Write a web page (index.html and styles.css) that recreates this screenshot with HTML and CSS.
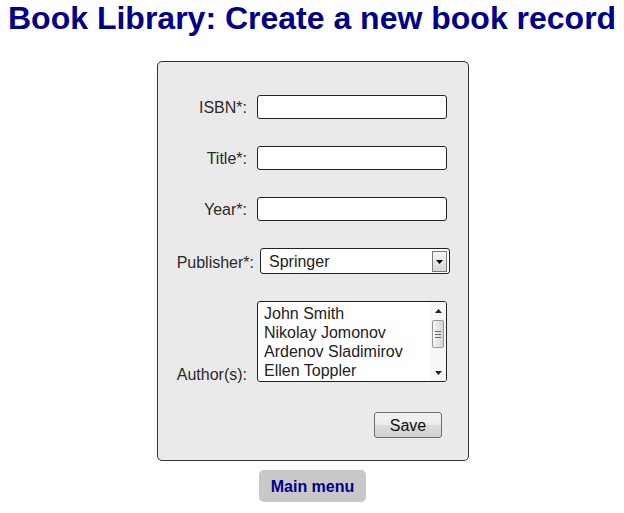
FILE: index.html
```html
<!DOCTYPE html>
<html lang="en">
<head>
<meta charset="utf-8">
<title>Book Library: Create a new book record</title>
<link rel="stylesheet" href="styles.css">
</head>
<body>
<h1 class="page-title">Book Library: Create a new book record</h1>
<form class="record-form">
  <div class="fields">
    <label class="field-label" for="isbn">ISBN*:</label>
    <input class="text-input" id="isbn" type="text">

    <label class="field-label" for="title">Title*:</label>
    <input class="text-input" id="title" type="text">

    <label class="field-label" for="year">Year*:</label>
    <input class="text-input" id="year" type="text">

    <label class="field-label field-label--wide" for="publisher">Publisher*:</label>
    <div class="select-wrap">
      <select class="select-input" id="publisher">
        <option>Springer</option>
      </select>
      <span class="select-button" aria-hidden="true">
        <svg width="7" height="4" viewBox="0 0 7 4"><path d="M0 0H7L3.5 4Z" fill="#000"/></svg>
      </span>
    </div>

    <label class="field-label field-label--bottom">Author(s):</label>
    <div class="listbox" role="listbox">
      <ul class="listbox-items">
        <li>John Smith</li>
        <li>Nikolay Jomonov</li>
        <li>Ardenov Sladimirov</li>
        <li>Ellen Toppler</li>
      </ul>
      <div class="scrollbar" aria-hidden="true">
        <span class="scroll-arrow">
          <svg width="7" height="4" viewBox="0 0 7 4"><path d="M0 4H7L3.5 0Z" fill="#222"/></svg>
        </span>
        <span class="scroll-track">
          <span class="scroll-thumb"><i></i><i></i><i></i></span>
        </span>
        <span class="scroll-arrow">
          <svg width="7" height="4" viewBox="0 0 7 4"><path d="M0 0H7L3.5 4Z" fill="#222"/></svg>
        </span>
      </div>
    </div>

    <div class="actions">
      <button class="save-button" type="button">Save</button>
    </div>
  </div>
</form>
<nav class="menu-nav">
  <a class="menu-button" href="#">Main menu</a>
</nav>
</body>
</html>
```
FILE: styles.css
```css
html, body {
  background: #fff;
}
body {
  margin: 0 8px;
  font-family: "Liberation Sans", Arial, sans-serif;
  font-size: 16px;
  color: #222;
}
.page-title {
  margin: 0 0 24px;
  font-size: 32px;
  font-weight: bold;
  color: #00008b;
  white-space: nowrap;
}
.record-form {
  box-sizing: border-box;
  width: 312px;
  margin-left: calc(50% - 155px);
  padding: 33px 21px 22px 0;
  background: #eaeaea;
  border: 1px solid #333;
  border-radius: 5px;
}
.fields {
  display: grid;
  grid-template-columns: 89px 190px;
  column-gap: 10px;
  row-gap: 27px;
  align-items: baseline;
}
.field-label {
  text-align: right;
  color: #2a2a2a;
  white-space: nowrap;
  position: relative;
  top: 1px;
}
.field-label--wide {
  margin-right: -7px;
}
.field-label--bottom {
  align-self: end;
  margin-bottom: -1px;
}
.text-input {
  box-sizing: border-box;
  width: 190px;
  height: 24px;
  margin: 0;
  padding: 0 4px;
  border: 1px solid #222;
  border-radius: 3px;
  background: #fff;
  font: 16px "Liberation Sans", Arial, sans-serif;
  color: #000;
}
.select-wrap {
  position: relative;
  width: 190px;
  height: 26px;
  margin-left: 3px;
}
.select-input {
  -webkit-appearance: none;
  appearance: none;
  box-sizing: border-box;
  width: 190px;
  height: 26px;
  margin: 0;
  padding: 1px 0 0 8px;
  border: 1px solid #222;
  border-radius: 3px;
  background: #fff;
  font: 16px "Liberation Sans", Arial, sans-serif;
  color: #222;
}
.select-button {
  position: absolute;
  top: 3px;
  right: 3px;
  box-sizing: border-box;
  width: 15px;
  height: 21px;
  display: flex;
  align-items: center;
  justify-content: center;
  border: 1px solid #7a7a7a;
  background: linear-gradient(#f6f6f6, #d8d8d8);
  pointer-events: none;
}
.select-button svg {
  display: block;
  margin-top: 1px;
}
.listbox {
  box-sizing: border-box;
  width: 190px;
  height: 81px;
  display: flex;
  border: 1px solid #222;
  border-radius: 3px;
  background: #fff;
  overflow: hidden;
}
.listbox-items {
  flex: 1;
  margin: 0;
  padding: 2px 0 0 6px;
  list-style: none;
  line-height: 19px;
  color: #222;
  white-space: nowrap;
}
.scrollbar {
  width: 16px;
  display: flex;
  flex-direction: column;
  background: #f7f7f7;
}
.scroll-arrow {
  height: 17px;
  display: flex;
  align-items: center;
  justify-content: center;
}
.scroll-arrow svg {
  display: block;
}
.scroll-track {
  flex: 1;
  display: flex;
  flex-direction: column;
}
.scroll-thumb {
  box-sizing: border-box;
  width: 12px;
  height: 28px;
  margin: 1px 0 0 2px;
  display: flex;
  flex-direction: column;
  align-items: center;
  justify-content: center;
  gap: 2px;
  border: 1px solid #979797;
  border-radius: 2px;
  background: linear-gradient(to right, #f6f6f6, #e2e2e2 60%, #d4d4d4);
}
.scroll-thumb i {
  display: block;
  width: 6px;
  height: 1px;
  background: #6a6a6a;
}
.actions {
  grid-column: 2;
  display: flex;
  justify-content: flex-end;
  margin-top: 3px;
  padding-right: 5px;
}
.save-button {
  box-sizing: border-box;
  width: 68px;
  height: 26px;
  margin: 0;
  padding: 1px 0 0;
  border: 1px solid #707070;
  border-radius: 3px;
  background: linear-gradient(#f3f3f3 0%, #ebebeb 50%, #dddddd 51%, #cfcfcf 100%);
  font: 16px "Liberation Sans", Arial, sans-serif;
  color: #111;
}
.menu-nav {
  display: flex;
  justify-content: center;
  margin-top: 9px;
  padding-left: 1px;
}
.menu-button {
  display: block;
  padding: 8px 12px 6px;
  line-height: 18px;
  border-radius: 5px;
  background: #c8c8c8;
  color: #00008b;
  font-weight: bold;
  text-decoration: none;
}
```
